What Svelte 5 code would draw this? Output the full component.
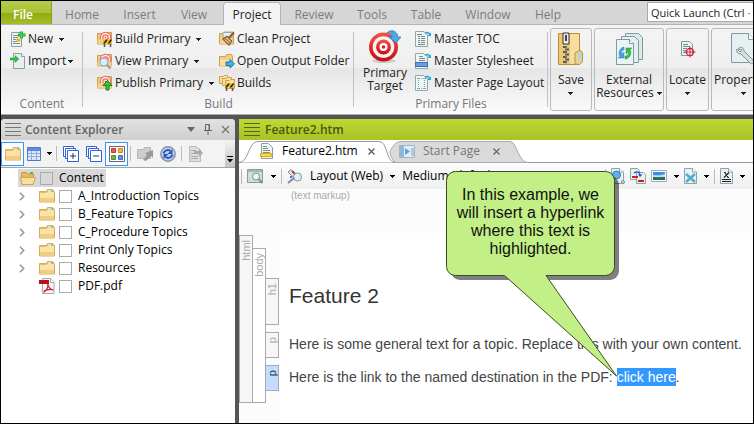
<script>
  const menuTabs = ['Home', 'Insert', 'View', 'Project', 'Review', 'Tools', 'Table', 'Window', 'Help'];
  const folders = ['A_Introduction Topics', 'B_Feature Topics', 'C_Procedure Topics', 'Print Only Topics', 'Resources'];
  const buildPrimary = [
    { label: 'Build Primary', badge: 'barrier' },
    { label: 'View Primary', badge: 'lens' },
    { label: 'Publish Primary', badge: 'up' },
  ];
  const masters = [
    { label: 'Master TOC', kind: 'toc' },
    { label: 'Master Stylesheet', kind: 'style' },
    { label: 'Master Page Layout', kind: 'layout' },
  ];
</script>

{#snippet arrow()}
  <svg class="arrow" width="5" height="3" viewBox="0 0 5 3" aria-hidden="true"><path d="M0 0h5v1H0zM1 1h3v1H1zM2 2h1v1H2z" fill="currentColor" /></svg>
{/snippet}

{#snippet grip(color)}
  <svg width="16" height="14" viewBox="0 0 16 14" aria-hidden="true">
    <path d="M0 .5h16M0 4.5h16M0 8.5h16M0 12.5h16" stroke={color} />
  </svg>
{/snippet}

{#snippet folder()}
  <svg width="16" height="14" viewBox="0 0 16 14" aria-hidden="true">
    <path d="M.5 2.500h7l1-2h5l2 2v10.500h-15z" fill="#e5bd66" stroke="#d6ae5c" />
    <path d="M9 1.500h4l1 1H9z" fill="#fff" /><path d="M12 1.500h2v1h-2z" fill="#3aa6e0" />
    <path d="M1 4h6.500l1-1H15v9.500H1z" fill="#fae3a6" /><path d="M1 9h14v3.500H1z" fill="#f0cd80" />
  </svg>
{/snippet}

{#snippet barrier()}
  <g transform="translate(6 8)">
    <path d="M1.500 4.500v3.500M7.500 4.500v3.500" stroke="#555" stroke-width="1.500" />
    <path d="M0 .5h9v4H0z" fill="#f5c211" /><path d="M0 4.500 3 .5h2l-3 4zM4.500 4.500l3-4H9v.5l-2.500 3.500z" fill="#222" />
  </g>
{/snippet}

{#snippet targetFolder(badge)}
  <svg width="16" height="16" viewBox="0 0 16 16" aria-hidden="true">
    <path d="M.5 2.500h5l1-1h8v11.500H.5z" fill="#f0cd82" stroke="#cfa04a" />
    <circle cx="8.500" cy="6.500" r="5.800" fill="#f26a6a" /><circle cx="8.500" cy="6.500" r="4.500" fill="#fff" />
    <circle cx="8.500" cy="6.500" r="3.300" fill="#f06464" /><circle cx="8.500" cy="6.500" r="2" fill="#fff" /><circle cx="8.500" cy="6.500" r="1" fill="#ee4545" />
    <path d="M.5 13V9l7-1.500 7 1.500v4z" fill="#f3d088" />
    {#if badge === 'barrier'}{@render barrier()}
    {:else if badge === 'lens'}
      <circle cx="7" cy="9" r="4" fill="#dcecf8" stroke="#93a7b5" /><path d="m10 12 3.500 3.500" stroke="#999" stroke-width="2" />
    {:else}
      <path d="M10.500 5.500 15 10.500h-3V15H9v-4.500H6z" fill="#35c440" stroke="#14821d" />
    {/if}
  </svg>
{/snippet}

{#snippet masterPage(kind)}
  <svg width="16" height="16" viewBox="0 0 16 16" aria-hidden="true">
    <path d="M.5.5H9L12.500 4v11.500H.5z" fill="#eff7f6" stroke="#8fa9a9" />
    {#if kind === 'toc'}
      <path d="M2 3.500h5M3 5.500h2M6 5.500h4M3 7.500h2M6 7.500h4M3 9.500h2M6 9.500h4M3 11.500h2M6 11.500h4M3 13.500h7" stroke="#788a8c" />
    {:else if kind === 'style'}
      <path d="M4 3.500h4M4 5.500h6M4 7.500h6" stroke="#788a8c" /><path d="M.5 9.500h12v4H.5z" fill="#6e9be0" stroke="#3a6cc0" />
    {:else}
      <path d="M3.500 3v11M9.500 3v11M2 3.500h9M2 13.500h9" stroke="#8aa3a3" stroke-dasharray="1 1" />
    {/if}
    <path d="M10 2.500c2-2 4-1 4.500 1" fill="none" stroke="#22a5e0" stroke-width="1.500" /><path d="M16 1.500V5h-3.500z" fill="#22a5e0" />
  </svg>
{/snippet}

{#snippet sheet()}
  <path d="M.5.5h8L12.500 4v11.500H.5z" fill="#e9f1f2" stroke="#8ca5a8" /><path d="M8.500.5V4h4" fill="#fff" stroke="#8ca5a8" />
{/snippet}

<div class="app">
  <header class="menubar">
    <button class="file">File</button>
    <nav>
      {#each menuTabs as tab}
        <button class="tab {tab.toLowerCase()}" class:active={tab === 'Project'}>{tab}</button>
      {/each}
    </nav>
    <input class="launch" aria-label="Quick Launch" value="Quick Launch (Ctrl + Q)" />
  </header>

  <section class="ribbon" aria-label="Project ribbon">
    <div class="group content-group">
      <div class="cols">
        <div class="col">
          <button class="cmd">
            <svg width="16" height="16" viewBox="0 0 16 16" aria-hidden="true">
              <path d="M1.500 1.500h10v14h-10z" fill="#edf5f5" stroke="#88a2a4" />
              <path d="M3 4.500h5M3 6.500h5M3 8.500h3M3 10.500h4M3 12.500h7" stroke="#7c9092" />
              <path d="m6 8 3-1 2 3-4 1z" fill="#f2b51c" /><path d="M11.500.5v7M8 4h7.500" stroke="#1ea832" stroke-width="3" /><path d="M11.500 1v6M9 4h6" stroke="#53dc5c" />
            </svg>New<span class="gap"></span>{@render arrow()}
          </button>
          <button class="cmd">
            <svg width="16" height="16" viewBox="0 0 16 16" aria-hidden="true">
              <path d="M3.500.5h8l3 3v12h-11z" fill="#e6f1f2" stroke="#88a2a4" /><path d="M11.500.5v3h3" fill="#fff" stroke="#88a2a4" />
              <path d="M0 5h5V2.500L9 6 5 9.500V7H0z" fill="#2fc545" stroke="#1c9a30" stroke-width=".5" />
            </svg>Import{@render arrow()}
          </button>
        </div>
      </div>
      <h2>Content</h2>
    </div>

    <div class="group build-group">
      <div class="cols">
        <div class="col primary">
          {#each buildPrimary as item}
            <button class="cmd">{@render targetFolder(item.badge)}{item.label}<span class="gap"></span>{@render arrow()}</button>
          {/each}
        </div>
        <div class="col">
          <button class="cmd">
            <svg width="16" height="16" viewBox="0 0 16 16" aria-hidden="true">
              <path d="M.5 2.500h5V1h9v12H.5z" fill="#f0cd82" stroke="#cfa04a" /><path d="M4 1.500h9v5H4z" fill="#e6f0ef" stroke="#94aaa9" />
              <path d="M1 7h12v6H1z" fill="#f4d48e" /><path d="m15 1.500-5 5" stroke="#8c5a28" stroke-width="2" />
              <path d="m8 5 5 5-3 4.500L3.500 8z" fill="#b88a58" stroke="#80552d" /><path d="m6 9 4 3M7 7l5 3.500" stroke="#e3c198" />
            </svg>Clean Project
          </button>
          <button class="cmd">
            <svg width="16" height="16" viewBox="0 0 16 16" aria-hidden="true">
              <path d="M.5 3.500h6l1-2h5l1 2v9.500H.5z" fill="#f0cd82" stroke="#cfa04a" /><path d="M1 6.500h12V13H1z" fill="#f8dfa3" />
              <path d="M7 9h4V6.500L15.500 11 11 15v-2.500H7z" fill="#49b1ea" stroke="#1d74b5" />
            </svg>Open Output Folder
          </button>
          <button class="cmd">
            <svg width="16" height="16" viewBox="0 0 16 16" aria-hidden="true">
              <path d="M.5 1.500h4l1-1h3v8h-8z" fill="#f8dfa3" stroke="#cfa04a" /><path d="M3.500 3.500h4l1-1h4v8h-9z" fill="#f8dfa3" stroke="#cfa04a" />
              <path d="M6.500 5.500h4l1-1h4v9h-9z" fill="#f8dfa3" stroke="#cfa04a" />{@render barrier()}
            </svg>Builds
          </button>
        </div>
      </div>
      <h2>Build</h2>
    </div>

    <div class="group files-group">
      <div class="cols">
        <button class="target">
          <svg width="32" height="34" viewBox="0 0 32 34" aria-hidden="true">
            <defs><linearGradient id="red" x2="0" y2="1"><stop stop-color="#f5524b" /><stop offset="1" stop-color="#c50d14" /></linearGradient></defs>
            <ellipse cx="15" cy="31" rx="12" ry="2" fill="#aaa" opacity=".5" />
            <circle cx="14.500" cy="17" r="14.500" fill="url(#red)" /><circle cx="14.500" cy="17" r="10.800" fill="#f7f2f2" />
            <circle cx="14.500" cy="17" r="7.500" fill="url(#red)" /><circle cx="14.500" cy="17" r="4" fill="#fff" /><circle cx="14.500" cy="17" r="1.800" fill="#dc1c20" />
            <path d="M18 3c3-4 10-3 11 4h3l-5 6-7-6h3c0-3-2-4-5-4z" fill="#4ba8e2" stroke="#2878b4" stroke-width=".7" />
          </svg>
          <span>Primary<br />Target</span>
        </button>
        <div class="col">
          {#each masters as item}
            <button class="cmd master">{@render masterPage(item.kind)}{item.label}</button>
          {/each}
        </div>
      </div>
      <h2>Primary Files</h2>
    </div>

    <div class="collapsed">
      <button class="big save">
        <svg width="26" height="34" viewBox="0 0 26 34" aria-hidden="true">
          <path d="M.5 1.500h21v31H.5z" fill="#edc976" stroke="#b98c3d" /><path d="M12 2h9v30h-9z" fill="#f6dda0" />
          <path d="M17 32V21l5-3 2.500 3v9l-3 2.500z" fill="#f3ce7d" stroke="#bf923f" /><path d="m20 21 3-2v10l-3 1z" fill="#9fdcf3" />
          <path d="M5 1h6v11H5z" fill="#eee" stroke="#333" /><path d="M8 3v6" stroke="#444" stroke-width="2" />
          <path d="M5 15h4M7 17.500h4M5 20h4M7 22.500h4M5 25h4M7 27.500h4M5 30h4" stroke="#555" stroke-width="2" /><path d="M8 14v18" stroke="#888" />
        </svg>
        <span>Save<br />{@render arrow()}</span>
      </button>
      <button class="big external">
        <svg width="27" height="34" viewBox="0 0 27 34" aria-hidden="true">
          <path d="M9.500 1.500h13l4 4v22h-17z" fill="#dbe9eb" stroke="#7d9ba0" /><path d="M5.500 4.500h13l4 4v22h-17z" fill="#e3eff0" stroke="#7d9ba0" />
          <path d="M.5 7.500h13l4 4v21H.5z" fill="#eaf4f4" stroke="#7d9ba0" /><path d="M13.500 7.500v4h4" fill="#fff" stroke="#7d9ba0" />
          <path d="M8 15c-5 1-6 7-4 10l-2 1h6v-6l-2 2c-1-2 0-4 2-4z" fill="#4a9de2" stroke="#3282c8" stroke-width=".5" /><path d="M9 27c5 0 7-6 5-10l2-1h-6v6l2-2c1 3-1 4-3 4z" fill="#35bd48" stroke="#1c9030" stroke-width=".5" />
        </svg>
        <span>External<br />Resources {@render arrow()}</span>
      </button>
      <button class="big locate">
        <svg width="16" height="34" viewBox="0 0 16 34" aria-hidden="true">
          <path d="M1.500 9.500h8l3 3v11h-11z" fill="#edf5f5" stroke="#7d9699" /><path d="M3 12.500h5M3 14.500h7M3 16.500h4M3 18.500h3M3 20.500h3" stroke="#74888a" />
          <circle cx="10" cy="20" r="3.500" fill="none" stroke="#d22238" stroke-width="1.300" /><path d="M10 14.500v11M4.500 20h11" stroke="#d22238" />
        </svg>
        <span>Locate<br />{@render arrow()}</span>
      </button>
      <button class="big properties">
        <svg width="25" height="34" viewBox="0 0 25 34" aria-hidden="true">
          <path d="M.5 1.500h17l6 6v23H.5z" fill="#e6f0f1" stroke="#7d9ba0" /><path d="M17.500 1.500v6h6" fill="#fff" stroke="#7d9ba0" />
          <path d="M7 17c2-3 6-2 6 2l9 9c2 3-1 5-3 3l-9-9c-4 0-5-3-4-5l3 3 2-2z" fill="#d8dcdf" stroke="#87949b" />
        </svg>
        <span>Properties<br />{@render arrow()}</span>
      </button>
    </div>
  </section>

  <main>
    <aside>
      <header class="panel-head">
        {@render grip('#777')}
        <h1>Content Explorer</h1>
        <button aria-label="Panel menu"><svg width="8" height="5" viewBox="0 0 8 5"><path d="M0 0h8L4 5z" fill="#666" /></svg></button>
        <button aria-label="Pin"><svg width="8" height="11" viewBox="0 0 8 11"><path d="M1.500 6V.5h4V6M5.500.5V6M0 6.500h8M4 7v4" fill="none" stroke="#666" /><path d="M5 1v5" stroke="#666" /></svg></button>
        <button aria-label="Close"><svg width="9" height="9" viewBox="0 0 9 9"><path d="m1 1 7 7M8 1 1 8" stroke="#777" stroke-width="1.300" /></svg></button>
      </header>
      <div class="tools">
        <button class="tool on" aria-label="Show files">{@render folder()}</button>
        <button class="tool grid" aria-label="Columns">
          <svg width="14" height="14" viewBox="0 0 14 14"><path d="M.5.5h13v13H.5z" fill="#dce8ff" stroke="#5578c0" /><path d="M1 1h12v3H1z" fill="#5f8ae0" /><path d="M1 6.500h12M1 9.500h12M4.500 4v9M9.500 4v9" stroke="#8eabe6" /></svg>
          {@render arrow()}
        </button>
        <i></i>
        <button class="tool" aria-label="Expand all"><svg width="16" height="16" viewBox="0 0 16 16"><path d="M2.500 10.500h-2V.5h10v2M4 12.500H2.500v-10h10V4M4.500 4.500h11v11h-11z" fill="#fff" stroke="#3260d8" /><path d="M10 7v6M7 10h6" stroke="#222e80" /></svg></button>
        <button class="tool" aria-label="Collapse all"><svg width="16" height="16" viewBox="0 0 16 16"><path d="M2.500 10.500h-2V.5h10v2M4 12.500H2.500v-10h10V4M4.500 4.500h11v11h-11z" fill="#fff" stroke="#3260d8" /><path d="M7 10h6" stroke="#222e80" /></svg></button>
        <button class="tool on" aria-label="Show all"><svg width="16" height="16" viewBox="0 0 16 16"><path d="M.5.5h15v15H.5z" fill="#fff" stroke="#667" /><path d="M2.500 2.500h4v4h-4z" fill="#ee5a4a" stroke="#c43b2e" /><path d="M9.500 2.500h4v4h-4z" fill="#f5b33b" stroke="#cf8c1c" /><path d="M2.500 9.500h4v4h-4z" fill="#6fb651" stroke="#4c8f32" /><path d="M9.500 9.500h4v4h-4z" fill="#5f94e4" stroke="#3b6ebd" /></svg></button>
        <i></i>
        <button class="tool" aria-label="Open"><svg width="16" height="16" viewBox="0 0 16 16"><path d="M.5 3.500h6l1-2h6v11H.5z" fill="#ccc" stroke="#b5b5b5" /><path d="m6 14 4-5-2-2 8-3v8l-2-2-5 5z" fill="#999" /></svg></button>
        <button class="tool" aria-label="Refresh"><svg width="16" height="16" viewBox="0 0 16 16"><circle cx="8" cy="8" r="7.200" fill="#c5d2ea" stroke="#8793aa" stroke-width="1.500" /><path d="M3.500 7.500a4.500 4.500 0 0 1 7-2.500M12.500 8.500a4.500 4.500 0 0 1-7 2.500" fill="none" stroke="#2659c8" stroke-width="2" /><path d="M12.500 3v5H7.500zM3.500 13V8h5z" fill="#2659c8" /></svg></button>
        <i></i>
        <button class="tool" aria-label="Properties"><svg width="16" height="16" viewBox="0 0 16 16"><path d="M1.500.5h7l4 4v11h-11z" fill="#ddd" stroke="#bbb" /><path d="M3 4.500h5M3 7.500h4M3 10.500h7M3 12.500h7" stroke="#aaa" /><path d="M6 5h5V2l4 5-4 4V8H6z" fill="#aaa" /></svg></button>
        <button class="overflow" aria-label="More tools"><svg width="6" height="7" viewBox="0 0 6 7"><path d="M0 .5h6" stroke="#000" /><path d="M0 3h6L3 6.500z" /></svg></button>
      </div>
      <ul class="tree">
        <li>
          <div class="row root">
            <svg width="16" height="14" viewBox="0 0 16 14" aria-hidden="true"><path d="M1.500 13V1.500h5l1 1.500h6v10z" fill="#e2ba64" stroke="#c89b48" /><path d="M10 1h3v2h-3z" fill="#5ab85c" /><path d="M.5 6.500h15L13 13.500H2z" fill="#f9e0a0" stroke="#cfa552" /></svg>
            <input type="checkbox" id="root" /><label for="root">Content</label>
          </div>
          <ul>
            {#each folders as name, n}
              <li class="row">
                <button class="twist" aria-label="Expand {name}"><svg width="6" height="9" viewBox="0 0 6 9"><path d="m1 .8 3.700 3.700L1 8.200" fill="none" stroke="#999" stroke-width="1.600" /></svg></button>
                {@render folder()}<input type="checkbox" id="f{n}" /><label for="f{n}">{name}</label>
              </li>
            {/each}
            <li class="row">
              <span class="twist"></span>
              <svg width="16" height="16" viewBox="0 0 16 16" aria-hidden="true"><path d="M3.500.5h8l3.500 4v11H3.500z" fill="#f7f7f7" stroke="#aaa" /><path d="M11.500.5v4H15" fill="#fff" stroke="#aaa" /><path d="M0 2h10v4H0z" fill="#b3121e" /><path d="M8.500 6c1 3 3 6 6 6M9 6c0 4-2 7-4.500 8.500M5 13c3-2 5-2 9-1.500" fill="none" stroke="#c81f2c" stroke-width="1.200" /></svg>
              <input type="checkbox" id="pdf" /><label for="pdf">PDF.pdf</label>
            </li>
          </ul>
        </li>
      </ul>
    </aside>

    <section class="editor">
      <header class="doc-head">{@render grip('#56631a')}<h1>Feature2.htm</h1></header>
      <div class="doc-tabs">
        <svg class="tab-shapes" width="290" height="23" viewBox="0 0 290 23" aria-hidden="true">
          <path d="M151 11.500c3-6 6-10 11-10h109c7 0 8 21 18 21H156c-3-4-5-7-5-11z" fill="#dadada" stroke="#aaa" />
          <path d="M0 22.500c10 0 9-21 19-21h121c9 0 7 21 16 21" fill="#fff" stroke="#999" />
        </svg>
        <button class="doc-tab current">
          <svg width="14" height="16" viewBox="0 0 14 16" aria-hidden="true"><path d="M1.500.5h7l4 4v11h-11z" fill="#eef6f6" stroke="#889fa1" /><path d="M3 3.500h4M3 5.500h5M3 7.500h7M3 9.500h7" stroke="#7c9092" /><path d="M.5 10.500h11v3H.5z" fill="#ffd83b" stroke="#e6a800" /></svg>
          <span>Feature2.htm</span>
        </button>
        <button class="x" aria-label="Close Feature2.htm"><svg width="7" height="7" viewBox="0 0 7 7"><path d="m.5.5 6 6M6.500.5l-6 6" stroke="#555" stroke-width="1.200" /></svg></button>
        <button class="doc-tab start">
          <svg width="16" height="13" viewBox="0 0 16 13" aria-hidden="true"><path d="M.5.5h15v12H.5z" fill="#e5edf3" stroke="#9db5c8" /><path d="M1 1h4v11H1z" fill="#8fb9da" /><path d="m6 3 5 3.500L6 10z" fill="#5ba3d8" /><path d="M12 3h3v8h-3z" fill="#a9cbe5" /></svg>
          <span>Start Page</span>
        </button>
        <button class="x" aria-label="Close Start Page"><svg width="7" height="7" viewBox="0 0 7 7"><path d="m.5.5 6 6M6.500.5l-6 6" stroke="#666" stroke-width="1.200" /></svg></button>
      </div>
      <div class="doc-tools">
        <i></i>
        <button class="t" aria-label="Preview"><svg width="17" height="15" viewBox="0 0 17 15"><path d="M.5.5h15v13H.5z" fill="#cfdcdc" stroke="#869c9c" /><path d="M1 1h14v2H1z" fill="#a4b8b8" /><circle cx="9" cy="7.500" r="3.500" fill="#edf5f8" stroke="#7e9499" /><path d="m11.500 10 4 4" stroke="#889" stroke-width="2" /></svg>{@render arrow()}</button>
        <i></i>
        <button class="t layout">
          <svg width="16" height="15" viewBox="0 0 16 15" aria-hidden="true"><path d="m1 3 3-2.500 8 9-2 2z" fill="#dde7ee" stroke="#8195a2" /><path d="m5 2 5 5" stroke="#c33" stroke-width="2" /><circle cx="10.500" cy="8" r="4" fill="#e4f0f8" stroke="#7a93a6" /><path d="m1 14 6-5" stroke="#889" stroke-width="2" /><path d="M3 7h2v2H3z" fill="#3b7bd4" /></svg>
          <span>Layout (Web)</span>{@render arrow()}
        </button>
        <button class="t medium"><span>Medium (default)</span>{@render arrow()}</button>
        <i></i>
        <button class="t" aria-label="Preview page"><svg width="14" height="16" viewBox="0 0 14 16">{@render sheet()}<circle cx="5.500" cy="7" r="4" fill="#5bb0e8" stroke="#3880b8" /><circle cx="12" cy="14" r="1.500" fill="#ddd" stroke="#888" /></svg></button>
        <button class="t" aria-label="Track changes"><svg width="16" height="16" viewBox="0 0 16 16"><path d="M.5.5h7l2 2v9h-9z" fill="#e9f1f2" stroke="#8ca5a8" /><path d="M6.500 4.500h7l2 2v9h-9z" fill="#e9f1f2" stroke="#8ca5a8" /><path d="M2 8h6v2H2zM8 12h6v2H8z" fill="#d71920" /><path d="M4 5c3-2 6-1 6 2" fill="none" stroke="#2554cc" stroke-width="1.300" /><path d="M8 6.500h4.500L10 9z" fill="#2554cc" /></svg></button>
        <button class="t" aria-label="Image"><svg width="16" height="12" viewBox="0 0 16 12"><path d="M.5.5h15v11H.5z" fill="#fff" stroke="#9ab" /><path d="M2 2h12v8H2z" fill="#3b8fdc" /><path d="M2 5c4 0 6 1 12-1v3H2z" fill="#b8dff8" /><path d="M2 7c5 1 8 0 12 0v3H2z" fill="#2c6a4c" /></svg>{@render arrow()}</button>
        <button class="t" aria-label="Conditions"><svg width="13" height="16" viewBox="0 0 13 16">{@render sheet()}<path d="m2 6 9 8M11 6l-9 8" stroke="#52aed0" stroke-width="2.500" /></svg>{@render arrow()}</button>
        <i></i>
        <button class="t" aria-label="Variables"><svg width="13" height="16" viewBox="0 0 13 16">{@render sheet()}<path d="M4 4.500h1l3 5h1M9 4.500 4 9.500" fill="none" stroke="#222" stroke-width="1.200" /><path d="M2 11.500h9M2 13.500h9" stroke="#222" /></svg>{@render arrow()}</button>
      </div>
      <div class="markup">(text markup)</div>
      <div class="doc">
        <div class="strip html"><span>html</span></div>
        <div class="strip body"><span>body</span></div>
        <article>
          <div class="block head"><div class="mark"><span>h1</span></div><h2>Feature 2</h2></div>
          <div class="block"><div class="mark"><span>p</span></div><p>Here is some general text for a topic. Replace this with your own content.</p></div>
          <div class="block"><div class="mark picked"><span>p</span></div><p>Here is the link to the named destination in the PDF: <mark>click here</mark>.</p></div>
        </article>
      </div>
    </section>
  </main>

  <div class="callout">
    <svg width="176" height="210" viewBox="0 0 176 210" aria-hidden="true">
      <rect x="5" y="5" width="168" height="104" rx="9" fill="#000" opacity=".5" />
      <path d="M9.500.5h150a9 9 0 0 1 9 9v86a9 9 0 0 1-9 9H100L170.500 205 58.500 104.500H9.500a9 9 0 0 1-9-9v-86a9 9 0 0 1 9-9z" fill="#c2ef86" stroke="#3c4a2a" />
    </svg>
    <p>In this example, we will insert a hyperlink where this text is highlighted.</p>
  </div>
</div>

<style>
  :global(body) { margin: 0; }
  .app, .app * { box-sizing: border-box; }
  .app {
    position: relative; display: flex; flex-direction: column; min-height: 100vh; overflow: hidden;
    border: 1px solid #000; background: #555;
    font: 12px/18px "Segoe UI", "Open Sans", "Noto Sans", sans-serif; color: #222;
  }
  button { display: flex; align-items: center; padding: 0; border: 0; background: none; font: inherit; color: inherit; white-space: nowrap; }
  h1, h2, p, ul { margin: 0; padding: 0; font: inherit; }
  ul { list-style: none; }
  svg { display: block; flex: none; }

  .menubar { display: flex; height: 24px; background: #d6d6d6; border-bottom: 1px solid #b4b4b4; }
  .file { flex: none; justify-content: center; width: 51px; padding: 4px 6px 0 0; color: #fff; font-weight: 600; background: linear-gradient(#b5cc4a, #a9c236 50%, #91ab10 51%, #a5bd2a); border-right: 1px solid #8ba11c; }
  nav { display: flex; flex: 1; min-width: 0; }
  .tab { flex: none; justify-content: center; height: 24px; padding-top: 4px; color: #7d7d7d; }
  .home { width: 60px; }
  .insert { width: 55px; }
  .view { width: 54px; }
  .project { width: 58px; margin: 1px 2px 0 2px; }
  .tab.active { height: 23px; padding-top: 2px; background: #f4f4f4; border: 1px solid #b4b4b4; border-bottom: 0; border-radius: 4px 4px 0 0; color: #222; }
  .review { width: 62px; }
  .tab.tools { width: 54px; height: 24px; background: none; border: 0; }
  .table { width: 54px; }
  .window { width: 70px; }
  .help { width: 50px; }
  .launch { flex: none; width: 106px; height: 20px; margin-top: 1px; padding: 0 3px; border: 1px solid #aaa; border-right: 0; background: #fff; font: inherit; font-size: 11px; color: #222; }

  .ribbon { display: flex; flex: none; height: 90px; overflow: hidden; background: linear-gradient(#f4f4f4, #efefef 48%, #e6e6e6 49%, #fbfbfb); border-bottom: 1px solid #aaa; }
  .group { position: relative; display: flex; flex: none; flex-direction: column; padding-top: 3px; }
  .group::after { content: ""; position: absolute; right: 0; top: 7px; bottom: 7px; width: 1px; background: #c2c2c2; }
  .content-group { width: 82px; }
  .build-group { width: 271px; }
  .files-group { width: 194px; }
  .group h2 { color: #777; text-align: center; line-height: 20px; }
  .cols { display: flex; height: 66px; }
  .content-group .cols { padding-left: 9px; }
  .build-group .cols { padding-left: 14px; }
  .files-group .cols { padding-left: 10px; }
  .primary { width: 122px; }
  .cmd { height: 22px; gap: 2px; }
  .gap { width: 2px; }
  .master { gap: 3px; }
  .target { flex-direction: column; width: 42px; margin-right: 9px; padding-top: 2px; line-height: 13px; text-align: center; }
  .target span { margin-top: 2px; }
  .collapsed { display: flex; flex: 1; gap: 2px; min-width: 0; padding: 3px 0 3px 2px; overflow: hidden; }
  .big { flex: none; flex-direction: column; align-items: center; padding: 3px 2px 0; border: 1px solid #b9b9b9; border-radius: 3px; line-height: 13px; text-align: center; }
  .big span { margin-top: 7px; }
  .big .arrow { display: inline-block; vertical-align: middle; }
  .save { width: 42px; }
  .external { width: 70px; }
  .locate { width: 43px; }

  main { display: flex; flex: 1; gap: 4px; padding-top: 4px; }
  aside { display: flex; flex-direction: column; flex: none; width: 234px; background: #fff; border-radius: 4px 4px 0 0; overflow: hidden; }
  .panel-head { display: flex; align-items: center; height: 21px; padding: 0 5px 0 4px; background: linear-gradient(#e2e2e2, #cfcfcf); }
  .panel-head h1 { flex: 1; margin-left: 4px; font-weight: 600; color: #666; }
  .panel-head button { margin-left: 9px; }
  aside .tools { display: flex; flex: none; align-items: center; height: 28px; background: #f3f3f3; border-bottom: 1px solid #9aa; }
  .tool { flex: none; justify-content: center; width: 23px; height: 24px; }
  .tool.on { border: 1px solid #3c96f0; background: #fafcff; }
  .grid { width: 30px; gap: 6px; }
  .tools i, .doc-tools i { width: 1px; height: 15px; background: #bbb; }
  .tools i { margin: 0 2px; }
  .grid .arrow { color: #000; }
  .overflow { justify-content: center; align-items: flex-end; align-self: stretch; width: 10px; margin-left: auto; padding-bottom: 4px; background: linear-gradient(#f4f4f4, #c2c2c2); }
  .tree { padding-top: 1px; color: #000; }
  .row { display: flex; align-items: center; height: 18px; }
  .root { width: max-content; margin-left: 17px; padding: 0 2px; background: #d8d8d8; }
  .row input { appearance: none; flex: none; width: 13px; height: 13px; margin: 0 6px 0 4px; border: 1px solid #aaa; background: transparent; }
  .twist { flex: none; width: 20px; margin-left: 18px; }

  .editor { display: flex; flex: 1; flex-direction: column; min-width: 0; background: #fcfcfc; }
  .doc-head { display: flex; align-items: center; height: 21px; padding-left: 5px; background: linear-gradient(#bfd831, #a9c225); }
  .doc-head h1 { margin-left: 5px; font-weight: 600; color: #4a5614; }
  .doc-tabs { position: relative; display: flex; align-items: center; height: 23px; padding-left: 21px; background: #fff; border-bottom: 1px solid #999; }
  .tab-shapes { position: absolute; left: 0; top: 0; }
  .doc-tab, .x { position: relative; }
  .doc-tab { gap: 8px; width: 108px; color: #000; }
  .start { width: 94px; margin-left: 24px; color: #777; }
  .doc-tools { display: flex; align-items: center; gap: 5px; height: 26px; padding-left: 2px; overflow: hidden; background: linear-gradient(#fdfdfd, #efefef); color: #000; }
  .t { flex: none; gap: 7px; }
  .doc-tools i { flex: none; }
  .medium { width: 198px; margin-left: 2px; }
  .markup { height: 44px; padding-left: 52px; font: 10px/13px "Liberation Sans", Arial, sans-serif; color: #aaa; }
  .doc { display: flex; flex: 1; align-items: flex-start; }
  .strip, .mark { flex: none; width: 14px; border: 1px solid #aaa; background: #f6f6f6; color: #aaa; font: 11px/12px "Liberation Sans", Arial, sans-serif; }
  .strip span, .mark span { display: block; writing-mode: vertical-rl; transform: rotate(180deg); padding-bottom: 4px; }
  .strip { margin-right: -1px; }
  .html { height: 168px; margin-top: 2px; }
  .body { height: 155px; margin-top: 15px; background: #fff; }
  article { display: flex; flex: 1; flex-direction: column; gap: 7px; align-self: stretch; min-width: 0; padding-top: 45px; background: linear-gradient(#fff, #fff) 14px 0 no-repeat; font: 14px/24px "Liberation Sans", Arial, sans-serif; color: #444; }
  .block { display: flex; height: 26px; white-space: nowrap; }
  .block > :last-child { margin-left: 10px; }
  .head { height: 47px; }
  .head h2 { font-size: 21px; line-height: 36px; color: #333; }
  .picked { background: #bfdfff; color: #333; }
  mark { padding: 1px 0; background: #3399ff; color: #fff; }

  .callout { position: absolute; left: 445px; top: 170px; width: 169px; }
  .callout svg { position: absolute; left: 0; top: 0; }
  .callout p { position: relative; padding: 15px 8px; text-align: center; font: 16px/18px "Liberation Sans", Arial, sans-serif; color: #111; }
</style>
